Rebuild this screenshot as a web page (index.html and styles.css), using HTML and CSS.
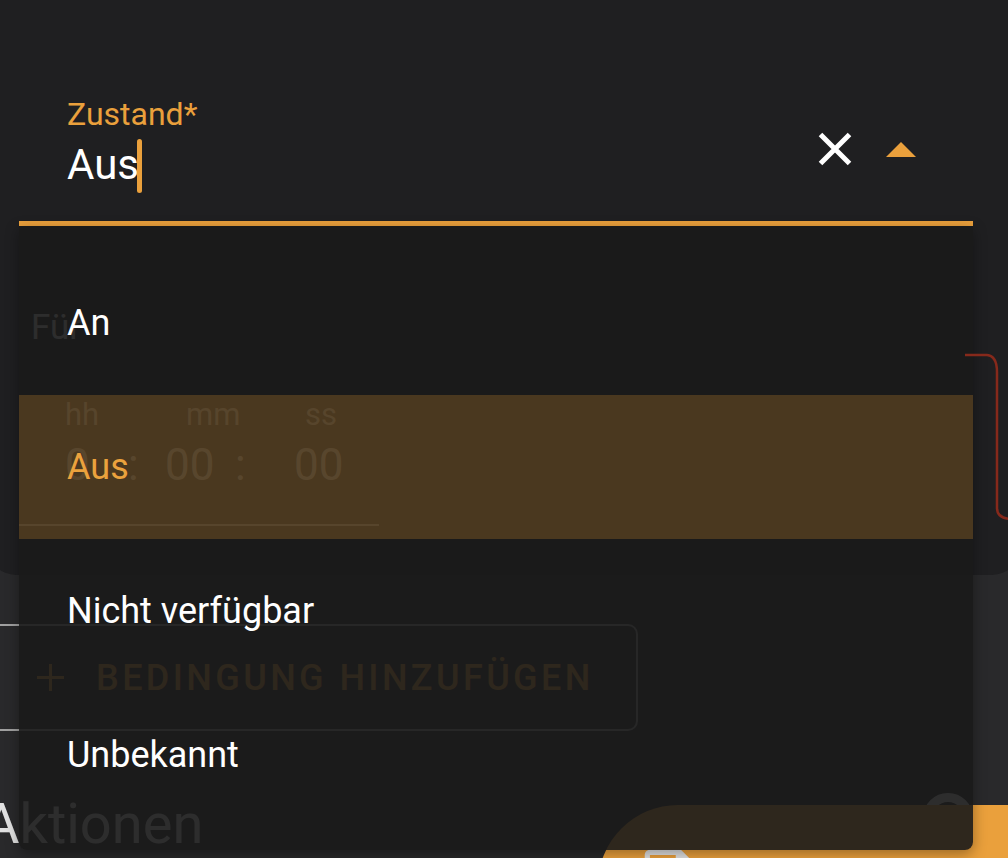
FILE: index.html
```html
<!DOCTYPE html>
<html lang="de">
<head>
<meta charset="utf-8">
<title>Zustand</title>
<link rel="stylesheet" href="styles.css">
</head>
<body>
<div class="page">
  <section class="card">
    <div class="field">
      <div class="field-text">
        <div class="label">Zustand*</div>
        <div class="value">Aus<span class="caret"></span></div>
      </div>
      <div class="field-icons">
        <svg class="clear" width="34" height="34" viewBox="0 0 34 34"><path d="M2.5 2.5 L31.5 31.5 M31.5 2.5 L2.5 31.5" stroke="#ffffff" stroke-width="5" fill="none"/></svg>
        <svg class="arrow" width="30" height="15" viewBox="0 0 30 15"><path d="M0 15 L15 0 L30 15 Z" fill="#eaa03c"/></svg>
      </div>
    </div>
    <div class="duration">
      <div class="dur-label">Für</div>
      <div class="time">
        <div class="time-labels"><span class="tl-h">hh</span><span class="tl-m">mm</span><span>ss</span></div>
        <div class="time-values"><span class="tv-h">0</span><span class="tv-c1">:</span><span class="tv-m">00</span><span class="tv-c2">:</span><span>00</span></div>
      </div>
    </div>
  </section>

  <button class="add-btn" type="button">
    <svg width="27" height="27" viewBox="0 0 27 27"><path d="M13.5 0 V27 M0 13.5 H27" stroke="#eaa03c" stroke-width="3" fill="none"/></svg>
    <span>Bedingung hinzufügen</span>
  </button>

  <h2 class="section-title">Aktionen</h2>

  <div class="help-ring"></div>
  <div class="fab">
    <svg width="62" height="62" viewBox="0 0 24 24"><path fill="#e1e1e1" d="M15,9H5V5H15M12,19A3,3 0 0,1 9,16A3,3 0 0,1 12,13A3,3 0 0,1 15,16A3,3 0 0,1 12,19M17,3H5C3.89,3 3,3.9 3,5V19A2,2 0 0,0 5,21H19A2,2 0 0,0 21,19V7L17,3Z"/></svg>
  </div>

  <ul class="listbox" role="listbox">
    <li class="option">An</li>
    <li class="option selected">Aus</li>
    <li class="option">Nicht verfügbar</li>
    <li class="option">Unbekannt</li>
  </ul>

  <svg class="mark" width="50" height="176" viewBox="0 0 50 176"><path d="M5 5 L27 5 Q37 6 37 22 L37 158 Q37 168 50 169" stroke="#86291b" stroke-width="2.5" fill="none"/></svg>
</div>
</body>
</html>
```

FILE: styles.css
```css
html, body {
  margin: 0;
  padding: 0;
}

body {
  width: 1008px;
  height: 858px;
  overflow: hidden;
  background: #29292b;
  font-family: Roboto, "Noto Sans", "Liberation Sans", sans-serif;
}

.page {
  position: relative;
  height: 858px;
  overflow: hidden;
}

/* background card */
.card {
  margin: 0 -12px;
  padding: 0 47px 49px 31px;
  background: #1f1f21;
  border-radius: 0 0 28px 28px;
}

.field {
  display: flex;
  box-sizing: border-box;
  height: 226px;
  padding: 96px 57px 0 48px;
  border-bottom: 5px solid #eaa03c;
}

.field-text {
  flex: 1;
}

.label {
  font-size: 32px;
  line-height: 36px;
  color: #eaa03c;
}

.value {
  display: flex;
  align-items: flex-start;
  margin-top: 7px;
  font-size: 42px;
  line-height: 52px;
  color: #ffffff;
}

.caret {
  width: 5px;
  height: 54px;
  margin-left: -2px;
  border-radius: 3px;
  background: #eaa03c;
}

.field-icons {
  display: flex;
  align-items: center;
  height: 106px;
  gap: 34px;
}

.dur-label {
  margin: 82px 0 0 12px;
  font-size: 35px;
  line-height: 40px;
  color: #e1e1e1;
}

.time {
  width: 360px;
  box-sizing: border-box;
  margin-top: 49px;
  padding: 0 0 33px 46px;
  border-bottom: 2px solid #c8c8c8;
}

.time-labels {
  display: flex;
  font-size: 31px;
  line-height: 36px;
  color: #c8c8c8;
}

.tl-h { width: 121px; }
.tl-m { width: 119px; }

.time-values {
  display: flex;
  margin-top: 6px;
  font-size: 44px;
  line-height: 52px;
  color: #e1e1e1;
}

.tv-h { width: 63px; }
.tv-c1 { width: 37px; }
.tv-m { width: 70px; }
.tv-c2 { width: 59px; }

/* outlined button */
.add-btn {
  display: flex;
  align-items: center;
  gap: 32px;
  box-sizing: border-box;
  width: 658px;
  height: 107px;
  margin: 49px 0 0 -20px;
  padding: 0 0 0 55px;
  background: transparent;
  border: 2px solid #a0a0a0;
  border-radius: 10px;
  color: #eaa03c;
  font-family: Roboto, "Noto Sans", sans-serif;
  font-weight: 500;
  font-size: 36px;
  letter-spacing: 3.4px;
  text-transform: uppercase;
}

.section-title {
  margin: 59px 0 0 -17px;
  font-size: 56px;
  line-height: 68px;
  font-weight: 400;
  color: #e1e1e1;
}

/* floating elements */
.help-ring {
  position: absolute;
  left: 923px;
  top: 793px;
  width: 50px;
  height: 50px;
  box-sizing: border-box;
  border: 9px solid #e1e1e1;
  border-radius: 50%;
}

.fab {
  position: absolute;
  left: 598px;
  top: 805px;
  width: 500px;
  height: 160px;
  border-radius: 80px;
  background: #eaa03c;
}

.fab svg {
  position: absolute;
  left: 39px;
  top: 37px;
}

/* dropdown list */
.listbox {
  position: absolute;
  left: 19px;
  top: 226px;
  width: 954px;
  height: 624px;
  box-sizing: border-box;
  margin: 0;
  padding: 25px 0 0;
  list-style: none;
  background: rgba(25, 25, 26, 0.9);
  border-radius: 0 0 8px 8px;
  box-shadow: 0 4px 14px rgba(0, 0, 0, 0.35);
}

.option {
  display: flex;
  align-items: center;
  height: 144px;
  padding-left: 48px;
  font-size: 36px;
  color: #ffffff;
}

.option.selected {
  background: rgba(240, 160, 50, 0.225);
  color: #eba23d;
}

.mark {
  position: absolute;
  left: 960px;
  top: 350px;
}
```
